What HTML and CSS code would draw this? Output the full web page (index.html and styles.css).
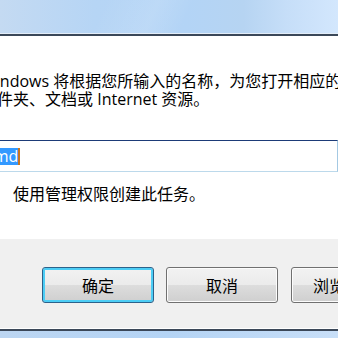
FILE: index.html
```html
<!DOCTYPE html>
<html lang="zh-CN">
<head>
<meta charset="utf-8">
<title>运行</title>
<link rel="stylesheet" href="styles.css">
</head>
<body>
<div class="win">
  <div class="frame-top"></div>
  <div class="edge-top"></div>
  <div class="content">
    <p class="desc">Windows 将根据您所输入的名称，为您打开相应的程序、<br>文件夹、文档或 Internet 资源。</p>
    <div class="input"><span class="sel">cmd</span><span class="caret"></span></div>
    <p class="admin">使用管理权限创建此任务。</p>
  </div>
  <div class="buttons">
    <button class="btn default">确定</button>
    <button class="btn">取消</button>
    <button class="btn browse">浏览(B)...</button>
  </div>
  <div class="edge-bottom"></div>
  <div class="frame-bottom"></div>
</div>
</body>
</html>
```
FILE: styles.css
```css
* { box-sizing: border-box; }
html, body { margin: 0; padding: 0; width: 338px; height: 338px; overflow: hidden; }
body {
  font-family: "Open Sans", "Noto Sans CJK SC", sans-serif;
  font-size: 16px;
  color: #000;
  background: #f0f0f0;
}
.win { width: 338px; height: 338px; overflow: hidden; }
.frame-top {
  height: 33px;
  background:
    linear-gradient(115deg, rgba(255,255,255,0) 30%, rgba(255,255,255,0.12) 45%, rgba(255,255,255,0) 55%),
    linear-gradient(to right, #c4daf2 0%, #b6d5f5 28%, #b3d4f6 55%, #b6d4f2 72%, #c6def8 85%, #d3e7fd 100%);
}
.edge-top { height: 3px; border-top: 1px solid #e3edf8; background: #3b4859; }
.content { height: 203px; background: #fff; padding-top: 36px; }
.desc { margin: 0 0 0 -19px; line-height: 18px; white-space: nowrap; }
.input {
  margin: 32px 0 0 -20px;
  height: 32px;
  border: 1px solid #a4c9e3;
  border-top-color: #1d3b78;
  border-bottom-color: #bcd9eb;
  display: flex;
  align-items: center;
  padding-left: 5px;
}
.sel { background: #3399ff; color: #fff; height: 17px; line-height: 17px; }
.caret { width: 2px; height: 17px; background: #c8741f; }
.admin { margin: 13px 0 0 13px; line-height: 18px; white-space: nowrap; }
.buttons {
  height: 89px;
  background: #f0f0f0;
  padding: 28px 0 0 42px;
  display: flex;
  gap: 12px;
  white-space: nowrap;
}
.btn {
  flex: none;
  width: 112px;
  height: 36px;
  margin: 0;
  padding: 0;
  font: inherit;
  font-size: 16px;
  color: #000;
  border: 1px solid #707070;
  border-radius: 3px;
  background: linear-gradient(#f2f2f2 0%, #ebebeb 50%, #dddddd 50%, #cfcfcf 100%);
  box-shadow: inset 0 0 0 1px #fcfcfc;
  display: flex;
  align-items: center;
  justify-content: center;
}
.btn.default {
  border-color: #2c628b;
  box-shadow: inset 0 0 0 2px #4ccdf5;
}
.btn.browse { margin-left: 1px; justify-content: flex-start; padding-left: 21px; }
.edge-bottom { height: 3px; border-top: 1px solid #fff; background: #3b4859; }
.frame-bottom { height: 7px; background: linear-gradient(to right, #bcd6f2, #b4d4f5 50%, #c8dff8); }
```
